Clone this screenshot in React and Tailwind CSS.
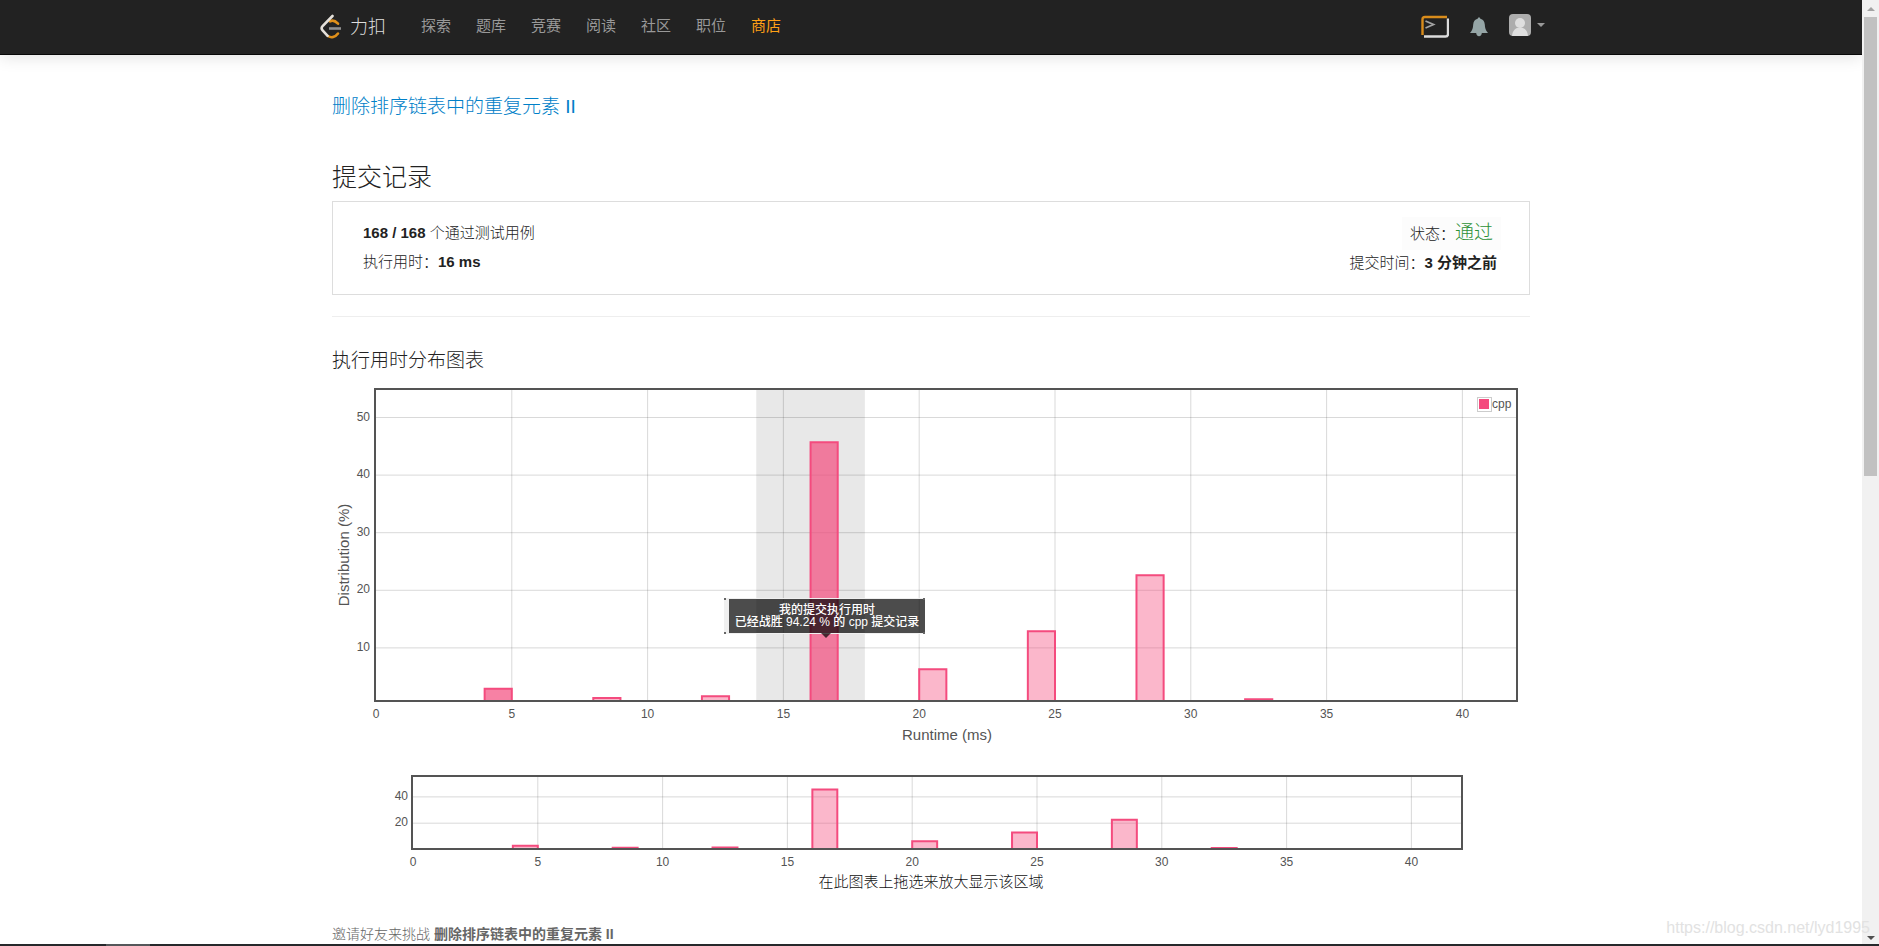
import React from "react";

const NAV = ["探索", "题库", "竞赛", "阅读", "社区", "职位"];

const BARS = [
  { x: 4, pct: 2.9, strong: true },
  { x: 8, pct: 1.3 },
  { x: 12, pct: 1.6 },
  { x: 16, pct: 45.7, strong: true },
  { x: 20, pct: 6.3 },
  { x: 24, pct: 12.9 },
  { x: 28, pct: 22.6 },
  { x: 32, pct: 1.1 },
];

const X_TICKS = [0, 5, 10, 15, 20, 25, 30, 35, 40];

function Logo() {
  return (
    <a href="#" className="flex items-center gap-2 text-[18px] text-[#dedede]">
      <svg width="22" height="26" viewBox="0 0 22 26" fill="none" strokeLinecap="round" strokeWidth="2.6">
        <path d="M10 7.400c3-1.800 5.300-.5 8 2.300" stroke="#e0901a" />
        <path d="M18 19.500c-2.800 3.800-6.800 4.800-10 2.500" stroke="#e0901a" />
        <path d="M12.500 2L2.600 12.200c-1.300 1.400-1.300 2.800 0 4.200l5 5.400" stroke="#e4e0da" />
        <path d="M9 14.500h12" stroke="#8f8f8f" strokeLinecap="butt" />
      </svg>
      力扣
    </a>
  );
}

function TerminalIcon() {
  return (
    <svg width="28" height="24" viewBox="0 0 28 24" fill="none" strokeWidth="2.4">
      <path d="M1.500 20V4.500q0-2.500 2.500-2.500H26" stroke="#d98c1b" />
      <path d="M3 21.500H24.500q2.500 0 2.500-2.500V3.500" stroke="#dcdcdc" />
      <path d="M4.500 6l8 3.500-8 3.500" stroke="#a3a3a3" strokeWidth="1.8" />
    </svg>
  );
}

function BellIcon() {
  return (
    <svg width="18" height="20" viewBox="0 0 18 20" fill="#95a5a6">
      <path d="M9 0.500c.9 0 1.300.6 1.300 1.200 2.900.6 4.300 2.800 4.500 5.800.2 3.600.7 5.500 3.200 8.500H0c2.500-3 3-4.900 3.200-8.500.2-3 1.600-5.200 4.500-5.800 0-.6.400-1.200 1.300-1.200z" />
      <path d="M6.200 16h5.600c0 1.800-1.200 3.200-2.800 3.200s-2.800-1.400-2.800-3.200z" />
    </svg>
  );
}

function Avatar() {
  return (
    <svg width="22" height="22" viewBox="0 0 22 22" className="rounded-[4px]">
      <rect width="22" height="22" fill="#adadad" />
      <circle cx="11" cy="9" r="5" fill="#dedede" />
      <path d="M3 22c.5-5.500 3.500-8.500 8-8.500s7.500 3 8 8.500z" fill="#dedede" />
    </svg>
  );
}

function Chart({ left, top, width, height, unit, unitY, base, yTicks, mini, labelX, children }) {
  const right = left + width;
  const bottom = top + height;
  const px = (v) => left + 1 + v * unit;
  const py = (v) => base - v * unitY;

  return (
    <g fontSize="12" fill="#545454">
      <g stroke="#545454" strokeOpacity="0.22">
        {X_TICKS.slice(1).map((t) => (
          <line key={t} x1={px(t)} x2={px(t)} y1={top} y2={bottom} />
        ))}
        {yTicks.map((t) => (
          <line key={t} x1={left} x2={right} y1={py(t)} y2={py(t)} />
        ))}
      </g>
      {!mini && <rect x={px(14)} y={top} width={unit * 4} height={height - 1} fill="#000" fillOpacity="0.09" />}
      {BARS.map((b) => (
        <path
          key={b.x}
          d={`M${px(b.x)} ${bottom}V${py(b.pct)}H${px(b.x + 1)}V${bottom}`}
          fill="#f44b7e"
          fillOpacity={b.strong && !mini ? 0.7 : 0.4}
          stroke="#f44b7e"
          strokeWidth="2"
        />
      ))}
      <rect x={left} y={top} width={width} height={height} fill="none" stroke="#545454" strokeWidth="2" />
      {X_TICKS.map((t) => (
        <text key={t} x={px(t)} y={bottom + 17} textAnchor="middle">
          {t}
        </text>
      ))}
      {yTicks.map((t) => (
        <text key={t} x={labelX} y={py(t) + 3} textAnchor="end">
          {t}
        </text>
      ))}
      {children}
    </g>
  );
}

function RuntimeChart() {
  return (
    <div className="relative">
      <svg viewBox="0 0 1198 366" className="block w-full" role="img" aria-label="执行用时分布图表">
        <Chart left={43} top={9} width={1142} height={312} unit={27.16} unitY={5.76} base={325.5} yTicks={[50, 40, 30, 20, 10]} labelX={38}>
          <rect x="1145.5" y="17.5" width="14" height="14" fill="#fff" stroke="#ccc" />
          <rect x="1147" y="19" width="10" height="10" fill="#f44b7e" />
          <text x="1160" y="28">
            cpp
          </text>
          <text x="615" y="360" fontSize="15" textAnchor="middle">
            Runtime (ms)
          </text>
          <text transform="translate(17 175) rotate(-90)" fontSize="15" textAnchor="middle">
            Distribution (%)
          </text>
        </Chart>
      </svg>
      <div className="absolute top-[218px] left-[392px] flex h-9 w-[201px] flex-col items-center justify-center border-y border-l-[5px] border-[#f0f0f0] bg-black/70 bg-clip-padding text-[12px] leading-3 font-medium whitespace-nowrap text-white">
        <span>我的提交执行用时</span>
        <span>已经战胜 94.24 % 的 cpp 提交记录</span>
        <span className="absolute top-full left-[92px] border-x-[5px] border-t-[5px] border-x-transparent border-t-black/70" />
        <span className="absolute -top-px -left-[5px] size-[2px] bg-[#666]" />
        <span className="absolute -bottom-px -left-[5px] size-[2px] bg-[#666]" />
        <span className="absolute -top-px right-0 size-[2px] bg-[#666]" />
        <span className="absolute right-0 -bottom-px size-[2px] bg-[#666]" />
      </div>
    </div>
  );
}

function OverviewChart() {
  return (
    <svg viewBox="0 0 1198 128" className="mt-[23px] block w-full" role="img" aria-label="在此图表上拖选来放大显示该区域">
      <Chart mini left={80} top={7} width={1050} height={73} unit={24.96} unitY={1.315} base={80.5} yTicks={[40, 20]} labelX={76}>
        <text x="599" y="118" fontSize="15" fontWeight="300" fill="#111" textAnchor="middle">
          在此图表上拖选来放大显示该区域
        </text>
      </Chart>
    </svg>
  );
}

function ScrollBar() {
  return (
    <div className="flex w-[17px] shrink-0 flex-col items-center justify-between bg-[#f1f1f1] pb-1">
      <div className="flex w-full flex-1 flex-col items-center">
        <div className="flex h-[17px] items-center">
          <span className="border-x-4 border-b-4 border-x-transparent border-b-[#a3a3a3]" />
        </div>
        <div className="h-[49%] w-[13px] bg-[#c1c1c1]" />
      </div>
      <span className="border-x-4 border-t-4 border-x-transparent border-t-[#505050]" />
    </div>
  );
}

export default function App() {
  return (
    <div className="relative flex h-screen flex-col overflow-hidden bg-white font-['Liberation_Sans','Noto_Sans_CJK_SC',sans-serif] text-[15px] font-light text-[#222]">
      <div className="flex min-h-0 flex-1">
        <div className="min-w-0 flex-1 overflow-hidden">
          <header className="border-b border-[#080808] bg-[#222] shadow-[0_2px_16px_rgba(0,0,0,0.12)]">
            <div className="mx-auto flex h-[54px] max-w-[1228px] items-center pl-[3px]">
              <Logo />
              <nav className="ml-[35px] flex gap-[25px] pb-[2px] font-normal text-[#999]">
                {NAV.map((item) => (
                  <a key={item} href="#">
                    {item}
                  </a>
                ))}
                <a href="#" className="text-[#ffa116]">
                  商店
                </a>
              </nav>
              <div className="ml-auto flex items-center gap-[21px]">
                <button aria-label="终端">
                  <TerminalIcon />
                </button>
                <button aria-label="通知">
                  <BellIcon />
                </button>
                <button aria-label="账户" className="flex items-center gap-[6px] pb-1">
                  <Avatar />
                  <span className="border-x-4 border-t-4 border-x-transparent border-t-[#999]" />
                </button>
              </div>
            </div>
          </header>

          <main className="mx-auto max-w-[1228px] px-[15px] pt-[38px]">
            <a href="#" className="block text-[19px] leading-7 text-[#0080c8]">
              删除排序链表中的重复元素 II
            </a>

            <h3 className="mt-[38px] text-[25px] leading-9">提交记录</h3>
            <section className="mt-[6px] flex justify-between border border-[#ddd] pt-4 pr-7 pb-[17px] pl-[30px]">
              <div className="leading-[29px]">
                <p>
                  <b className="font-bold">168 / 168</b> 个通过测试用例
                </p>
                <p>
                  执行用时：<b className="font-bold">16 ms</b>
                </p>
              </div>
              <div className="text-right leading-[29px]">
                <p>
                  <span className="bg-[#fcfcfc] px-2 py-2">
                    状态：<span className="text-[19px] text-[#2c9136]">通过</span>
                  </span>
                </p>
                <p className="pr-1">
                  提交时间：<b className="font-bold">3 分钟之前</b>
                </p>
              </div>
            </section>
            <hr className="mt-[21px] border-[#eee]" />

            <h4 className="mt-7 mb-[3px] text-[19px] leading-8">执行用时分布图表</h4>
            <RuntimeChart />
            <OverviewChart />

            <p className="mt-[27px] text-[14px] leading-5 text-[#666]">
              邀请好友来挑战 <b className="font-bold">删除排序链表中的重复元素 II</b>
            </p>
          </main>
        </div>
        <ScrollBar />
      </div>
      <div className="h-[2px] shrink-0 bg-[#26282b]">
        <div className="ml-[106px] h-full w-[44px] bg-[#55575a]" />
      </div>
      <span className="absolute right-[9px] bottom-[6px] text-[16px] text-[#e2e2e2]">https://blog.csdn.net/lyd1995</span>
    </div>
  );
}
